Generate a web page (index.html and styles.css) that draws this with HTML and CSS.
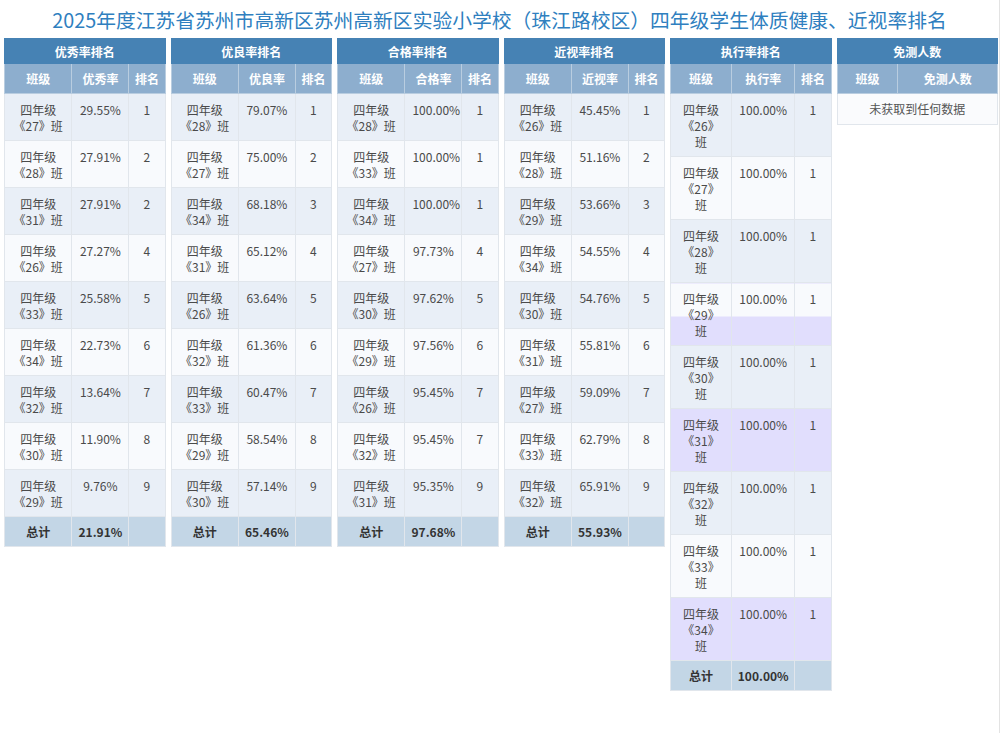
FILE: index.html
```html
<!DOCTYPE html>
<html lang="zh-CN">
<head>
<meta charset="utf-8">
<title>体质健康、近视率排名</title>
<link rel="stylesheet" href="styles.css">
</head>
<body>
<div class="page">
  <h1 class="title">2025年度江苏省苏州市高新区苏州高新区实验小学校（珠江路校区）四年级学生体质健康、近视率排名</h1>
  <div class="boards">
    <table class="rank">
      <colgroup><col class="c1"><col class="c2"><col class="c3"></colgroup>
      <thead>
        <tr class="h1row"><th colspan="3">优秀率排名</th></tr>
        <tr class="h2row"><th>班级</th><th>优秀率</th><th>排名</th></tr>
      </thead>
      <tbody>
        <tr class="odd"><td>四年级《27》班</td><td>29.55%</td><td>1</td></tr>
        <tr class="even"><td>四年级《28》班</td><td>27.91%</td><td>2</td></tr>
        <tr class="odd"><td>四年级《31》班</td><td>27.91%</td><td>2</td></tr>
        <tr class="even"><td>四年级《26》班</td><td>27.27%</td><td>4</td></tr>
        <tr class="odd"><td>四年级《33》班</td><td>25.58%</td><td>5</td></tr>
        <tr class="even"><td>四年级《34》班</td><td>22.73%</td><td>6</td></tr>
        <tr class="odd"><td>四年级《32》班</td><td>13.64%</td><td>7</td></tr>
        <tr class="even"><td>四年级《30》班</td><td>11.90%</td><td>8</td></tr>
        <tr class="odd"><td>四年级《29》班</td><td>9.76%</td><td>9</td></tr>
        <tr class="total"><td>总计</td><td>21.91%</td><td></td></tr>
      </tbody>
    </table>

    <table class="rank">
      <colgroup><col class="c1"><col class="c2"><col class="c3"></colgroup>
      <thead>
        <tr class="h1row"><th colspan="3">优良率排名</th></tr>
        <tr class="h2row"><th>班级</th><th>优良率</th><th>排名</th></tr>
      </thead>
      <tbody>
        <tr class="odd"><td>四年级《28》班</td><td>79.07%</td><td>1</td></tr>
        <tr class="even"><td>四年级《27》班</td><td>75.00%</td><td>2</td></tr>
        <tr class="odd"><td>四年级《34》班</td><td>68.18%</td><td>3</td></tr>
        <tr class="even"><td>四年级《31》班</td><td>65.12%</td><td>4</td></tr>
        <tr class="odd"><td>四年级《26》班</td><td>63.64%</td><td>5</td></tr>
        <tr class="even"><td>四年级《32》班</td><td>61.36%</td><td>6</td></tr>
        <tr class="odd"><td>四年级《33》班</td><td>60.47%</td><td>7</td></tr>
        <tr class="even"><td>四年级《29》班</td><td>58.54%</td><td>8</td></tr>
        <tr class="odd"><td>四年级《30》班</td><td>57.14%</td><td>9</td></tr>
        <tr class="total"><td>总计</td><td>65.46%</td><td></td></tr>
      </tbody>
    </table>

    <table class="rank">
      <colgroup><col class="c1"><col class="c2"><col class="c3"></colgroup>
      <thead>
        <tr class="h1row"><th colspan="3">合格率排名</th></tr>
        <tr class="h2row"><th>班级</th><th>合格率</th><th>排名</th></tr>
      </thead>
      <tbody>
        <tr class="odd"><td>四年级《28》班</td><td>100.00%</td><td>1</td></tr>
        <tr class="even"><td>四年级《33》班</td><td>100.00%</td><td>1</td></tr>
        <tr class="odd"><td>四年级《34》班</td><td>100.00%</td><td>1</td></tr>
        <tr class="even"><td>四年级《27》班</td><td>97.73%</td><td>4</td></tr>
        <tr class="odd"><td>四年级《30》班</td><td>97.62%</td><td>5</td></tr>
        <tr class="even"><td>四年级《29》班</td><td>97.56%</td><td>6</td></tr>
        <tr class="odd"><td>四年级《26》班</td><td>95.45%</td><td>7</td></tr>
        <tr class="even"><td>四年级《32》班</td><td>95.45%</td><td>7</td></tr>
        <tr class="odd"><td>四年级《31》班</td><td>95.35%</td><td>9</td></tr>
        <tr class="total"><td>总计</td><td>97.68%</td><td></td></tr>
      </tbody>
    </table>

    <table class="rank">
      <colgroup><col class="c1"><col class="c2"><col class="c3"></colgroup>
      <thead>
        <tr class="h1row"><th colspan="3">近视率排名</th></tr>
        <tr class="h2row"><th>班级</th><th>近视率</th><th>排名</th></tr>
      </thead>
      <tbody>
        <tr class="odd"><td>四年级《26》班</td><td>45.45%</td><td>1</td></tr>
        <tr class="even"><td>四年级《28》班</td><td>51.16%</td><td>2</td></tr>
        <tr class="odd"><td>四年级《29》班</td><td>53.66%</td><td>3</td></tr>
        <tr class="even"><td>四年级《34》班</td><td>54.55%</td><td>4</td></tr>
        <tr class="odd"><td>四年级《30》班</td><td>54.76%</td><td>5</td></tr>
        <tr class="even"><td>四年级《31》班</td><td>55.81%</td><td>6</td></tr>
        <tr class="odd"><td>四年级《27》班</td><td>59.09%</td><td>7</td></tr>
        <tr class="even"><td>四年级《33》班</td><td>62.79%</td><td>8</td></tr>
        <tr class="odd"><td>四年级《32》班</td><td>65.91%</td><td>9</td></tr>
        <tr class="total"><td>总计</td><td>55.93%</td><td></td></tr>
      </tbody>
    </table>

    <table class="rank exec">
      <colgroup><col class="e1"><col class="e2"><col class="e3"></colgroup>
      <thead>
        <tr class="h1row"><th colspan="3">执行率排名</th></tr>
        <tr class="h2row"><th>班级</th><th>执行率</th><th>排名</th></tr>
      </thead>
      <tbody>
        <tr class="odd"><td>四年级《26》班</td><td>100.00%</td><td>1</td></tr>
        <tr class="even"><td>四年级《27》班</td><td>100.00%</td><td>1</td></tr>
        <tr class="odd"><td>四年级《28》班</td><td>100.00%</td><td>1</td></tr>
        <tr class="split"><td>四年级《29》班</td><td>100.00%</td><td>1</td></tr>
        <tr class="odd"><td>四年级《30》班</td><td>100.00%</td><td>1</td></tr>
        <tr class="hl"><td>四年级《31》班</td><td>100.00%</td><td>1</td></tr>
        <tr class="odd"><td>四年级《32》班</td><td>100.00%</td><td>1</td></tr>
        <tr class="even"><td>四年级《33》班</td><td>100.00%</td><td>1</td></tr>
        <tr class="hl"><td>四年级《34》班</td><td>100.00%</td><td>1</td></tr>
        <tr class="total"><td>总计</td><td>100.00%</td><td></td></tr>
      </tbody>
    </table>

    <table class="rank exempt">
      <colgroup><col class="x1"><col class="x2"></colgroup>
      <thead>
        <tr class="h1row"><th colspan="2">免测人数</th></tr>
        <tr class="h2row"><th>班级</th><th>免测人数</th></tr>
      </thead>
      <tbody>
        <tr class="empty"><td colspan="2">未获取到任何数据</td></tr>
      </tbody>
    </table>
  </div>
</div>
</body>
</html>
```

FILE: styles.css
```css
* { box-sizing: border-box; }

html, body {
  margin: 0;
  padding: 0;
  background: #ffffff;
}

body {
  font-family: "Noto Sans CJK SC", "Noto Sans", sans-serif;
  font-size: 12px;
  color: #444;
}

.page {
  width: 1000px;
  min-height: 733px;
  border-right: 1px solid #e3e3e3;
}

.title {
  margin: 0;
  height: 38px;
  line-height: 40px;
  text-align: center;
  font-size: 19.8px;
  font-weight: normal;
  color: #2f7fbf;
  white-space: nowrap;
}

.boards {
  display: grid;
  grid-template-columns: repeat(6, 1fr);
  column-gap: 5px;
  align-items: start;
  padding: 0 1px 0 4px;
}

.rank {
  width: 100%;
  table-layout: fixed;
  border-collapse: collapse;
  border: 1px solid #dde3ea;
}

.c1 { width: 42%; }
.c2 { width: 35.5%; }
.c3 { width: 22.5%; }
.e1 { width: 38%; }
.e2 { width: 39.5%; }
.e3 { width: 22.5%; }
.x1 { width: 38%; }
.x2 { width: 62%; }

.rank th {
  color: #ffffff;
  font-weight: bold;
  font-size: 12px;
  text-align: center;
  padding: 0;
}

.h1row th {
  height: 25px;
  background: #4682b4;
  border: 1px solid #4682b4;
}

.h2row th {
  height: 30px;
  background: #8daece;
  border: 1px solid #b9cde0;
  border-top-color: #8daece;
}

.rank td {
  text-align: center;
  vertical-align: top;
  line-height: 16px;
  padding: 8px 7px 6px;
  border: 1px solid #e1e6ec;
  color: #4a4a4a;
}

.odd td { background: #e9eff7; }
.even td { background: #f8fafd; }
.hl td { background: #e1defd; }
.split td {
  background: linear-gradient(to bottom, #f8fafd 0, #f8fafd 33px, #e1defd 33px, #e1defd 100%);
}

.total td {
  background: #c3d6e6;
  font-weight: bold;
  color: #333;
  height: 30px;
  padding: 0 4px;
  vertical-align: middle;
}

.empty td {
  background: #fafbfd;
  height: 31px;
  padding: 0;
  vertical-align: middle;
  color: #555;
}
```
